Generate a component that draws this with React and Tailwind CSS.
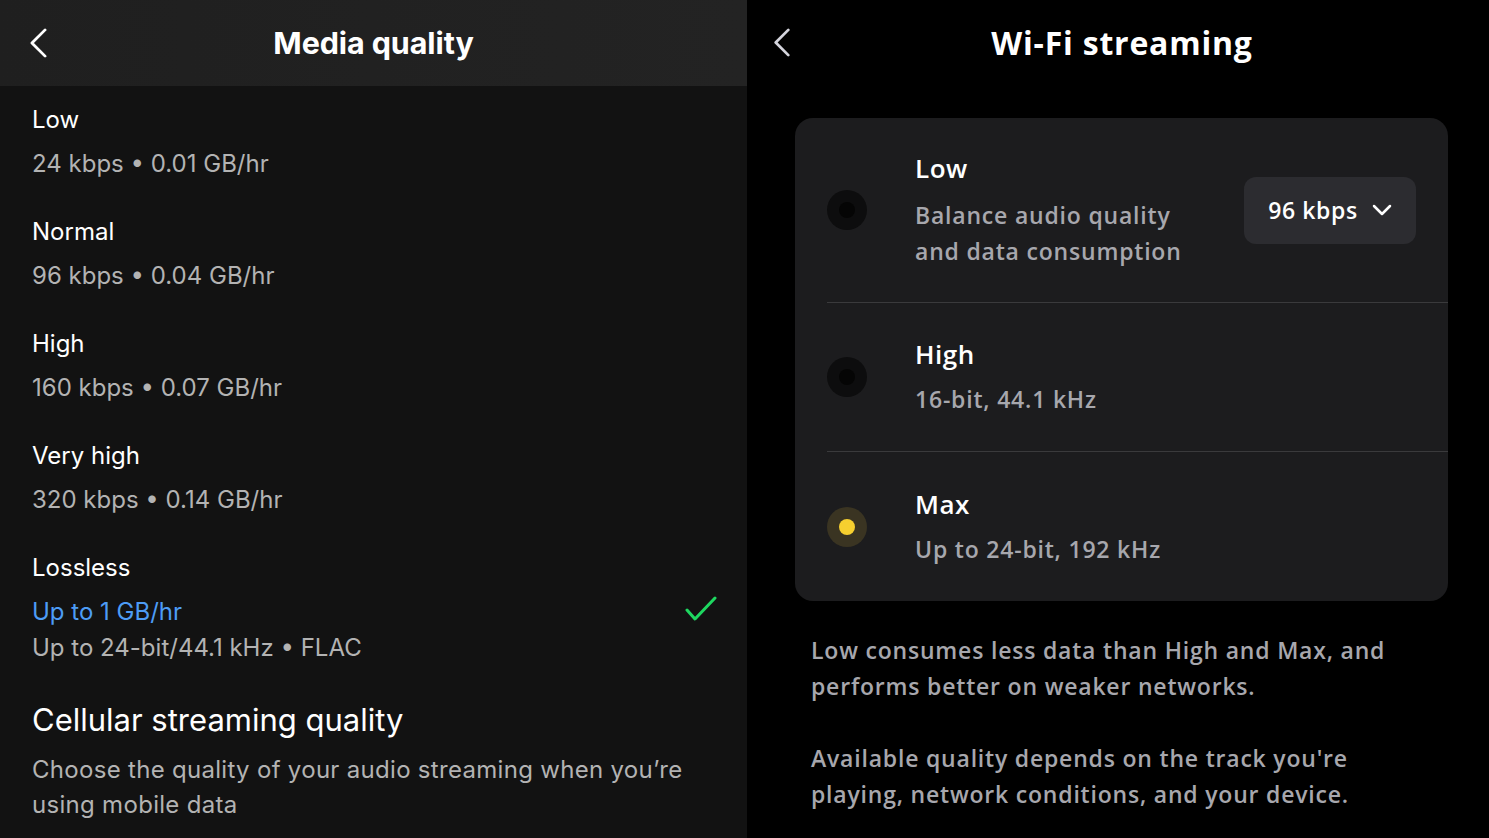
import React from "react";

const mediaRows = [
  { title: "Low", sub: "24 kbps • 0.01 GB/hr" },
  { title: "Normal", sub: "96 kbps • 0.04 GB/hr" },
  { title: "High", sub: "160 kbps • 0.07 GB/hr" },
  { title: "Very high", sub: "320 kbps • 0.14 GB/hr" },
];

const BackChevron = ({ className }) => (
  <svg viewBox="0 0 20 32" className={className} fill="none" stroke="currentColor" strokeWidth="3" strokeLinecap="round" strokeLinejoin="round">
    <path d="M17 2 L3 16 L17 30" />
  </svg>
);

const Radio = ({ selected }) =>
  selected ? (
    <div className="w-10 h-10 rounded-full bg-[#3a3422] flex items-center justify-center shrink-0">
      <div className="w-4 h-4 rounded-full bg-[#f6cf2f]" />
    </div>
  ) : (
    <div className="w-10 h-10 rounded-full bg-[#0d0d0e] flex items-center justify-center shrink-0">
      <div className="w-4 h-4 rounded-full bg-[#050505]" />
    </div>
  );

function MediaQuality() {
  return (
    <div className="w-[747px] h-[838px] bg-[#121212] text-white overflow-hidden font-['Inter',sans-serif]">
      <div className="h-[86px] bg-gradient-to-r from-[#1f1f1f] to-[#232323] flex items-center relative">
        <BackChevron className="absolute left-[29px] top-[28px] w-[19px] h-[30px] text-white" />
        <h1 className="w-full text-center text-[30.5px] font-bold tracking-[-0.1px]">Media quality</h1>
      </div>
      <div className="px-8 pt-[18px]">
        {mediaRows.map((r) => (
          <div key={r.title} className="h-[112px]">
            <div className="text-[24px] leading-[32px]">{r.title}</div>
            <div className="text-[24px] leading-[32px] mt-[12px] text-[#b3b3b3]">{r.sub}</div>
          </div>
        ))}
        <div className="flex items-start justify-between">
          <div>
            <div className="text-[24px] leading-[32px]">Lossless</div>
            <div className="text-[24px] leading-[32px] mt-[12px] text-[#4d9cf5]">Up to 1 GB/hr</div>
            <div className="text-[24px] leading-[32px] mt-[4px] text-[#b3b3b3]">Up to 24-bit/44.1 kHz • FLAC</div>
          </div>
          <svg viewBox="0 0 32 26" className="w-[32px] h-[26px] mt-[44px] mr-[-2px]" fill="none" stroke="#1ed760" strokeWidth="3" strokeLinecap="round" strokeLinejoin="round">
            <path d="M2 14 L10 23 L30 2" />
          </svg>
        </div>
        <div className="mt-[38px] text-[31px] leading-[36px]">Cellular streaming quality</div>
        <div className="mt-[14px] text-[24px] leading-[35px] text-[#b3b3b3] tracking-[0.3px] pr-[30px]">
          Choose the quality of your audio streaming when you’re using mobile data
        </div>
      </div>
    </div>
  );
}

function WifiStreaming() {
  return (
    <div className="flex-1 h-[838px] bg-black text-white overflow-hidden font-['Open_Sans',sans-serif]">
      <div className="h-[86px] relative flex items-center">
        <BackChevron className="absolute left-[26px] top-[28px] w-[18px] h-[29px] text-[#d4d4dc]" />
        <h1 className="w-full text-center text-[32px] font-bold tracking-[0.8px] pl-[8px]">Wi-Fi streaming</h1>
      </div>
      <div className="ml-[48px] mr-[41px] mt-[32px] bg-[#1c1c1e] rounded-[18px] overflow-hidden">
        <div className="ml-8 flex items-center h-[185px] border-b border-[#3a3a3c]">
          <Radio />
          <div className="ml-[48px] flex-1">
            <div className="text-[26px] font-semibold leading-[34px] tracking-[0.5px]">Low</div>
            <div className="text-[23px] font-semibold leading-[36px] text-[#a7a7ad] mt-[12px] tracking-[0.8px]">
              Balance audio quality
              <br />
              and data consumption
            </div>
          </div>
          <div className="mr-[32px] w-[172px] h-[67px] bg-[#2c2c30] rounded-[12px] flex items-center justify-center gap-[14px]">
            <span className="text-[23px] font-semibold tracking-[0.6px]">96 kbps</span>
            <svg viewBox="0 0 20 12" className="w-[20px] h-[12px]" fill="none" stroke="white" strokeWidth="2.5" strokeLinecap="round" strokeLinejoin="round">
              <path d="M2 2 L10 10 L18 2" />
            </svg>
          </div>
        </div>
        <div className="ml-8 flex items-center h-[149px] border-b border-[#3a3a3c]">
          <Radio />
          <div className="ml-[48px]">
            <div className="text-[26px] font-semibold leading-[34px] tracking-[0.5px]">High</div>
            <div className="text-[23px] font-semibold leading-[36px] text-[#a7a7ad] mt-[10px] tracking-[0.8px]">16-bit, 44.1 kHz</div>
          </div>
        </div>
        <div className="ml-8 flex items-center h-[149px]">
          <Radio selected />
          <div className="ml-[48px]">
            <div className="text-[26px] font-semibold leading-[34px] tracking-[0.5px]">Max</div>
            <div className="text-[23px] font-semibold leading-[36px] text-[#a7a7ad] mt-[10px] tracking-[0.8px]">Up to 24-bit, 192 kHz</div>
          </div>
        </div>
      </div>
      <div className="ml-[64px] mr-[60px] mt-[31px] text-[23px] font-semibold leading-[36px] text-[#a7a7ad] tracking-[0.8px]">
        <p>Low consumes less data than High and Max, and performs better on weaker networks.</p>
        <p className="mt-[36px]">Available quality depends on the track you're playing, network conditions, and your device.</p>
      </div>
    </div>
  );
}

export default function App() {
  return (
    <div className="w-[1489px] h-[838px] flex">
      <MediaQuality />
      <WifiStreaming />
    </div>
  );
}
